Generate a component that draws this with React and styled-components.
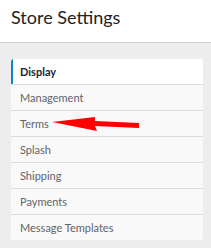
import styled, { createGlobalStyle } from "styled-components"

const Global = createGlobalStyle`
  html, body { margin: 0; padding: 0; background: #ededed; }
  body { font-family: Lato, "Open Sans", sans-serif; }
`

const items = ["Display", "Management", "Terms", "Splash", "Shipping", "Payments", "Message Templates"]

const App = () => {
  return (
    <Page>
      <Global />
      <Header>
        <Title>Store Settings</Title>
      </Header>
      <Body>
        <Menu>
          {items.map((label, i) => (
            <Item key={label} active={i === 0}>
              {label}
              {label === "Terms" && (
                <Arrow width="90" height="16" viewBox="0 0 90 16">
                  <polygon points="0,5 43,0 43,4 87,6 87,11 43,9 45,14" fill="#ff0000" />
                </Arrow>
              )}
            </Item>
          ))}
        </Menu>
      </Body>
    </Page>
  )
}

export default App

const Page = styled.div`
  width: 211px;
  min-height: 248px;
  background: #ededed;
`

const Header = styled.div`
  background: #fff;
  height: 43px;
  border-bottom: 1px solid #cfcfcf;
  box-sizing: border-box;
  padding: 5px 11px 0;
`

const Title = styled.h1`
  margin: 0;
  font-size: 18px;
  font-weight: 400;
  color: #222;
  line-height: 24px;
`

const Body = styled.div`
  padding: 16px 8px 0 11px;
`

const Menu = styled.div`
  background: #f9f9f9;
  border-radius: 3px;
  overflow: hidden;
  display: flex;
  flex-direction: column;
`

const Item = styled.div`
  position: relative;
  height: 25px;
  display: flex;
  align-items: center;
  box-sizing: border-box;
  padding-left: ${p => (p.active ? "7px" : "9px")};
  border-left: ${p => (p.active ? "2px solid #0a85c7" : "none")};
  background: ${p => (p.active ? "#fff" : "#f9f9f9")};
  font-size: 11px;
  font-weight: ${p => (p.active ? 700 : 400)};
  color: ${p => (p.active ? "#1c2430" : "#5f6368")};
  & + & {
    border-top: 1px solid #dcdcdc;
    height: 26px;
  }
`

const Arrow = styled.svg`
  position: absolute;
  left: 41px;
  top: 6px;
`
